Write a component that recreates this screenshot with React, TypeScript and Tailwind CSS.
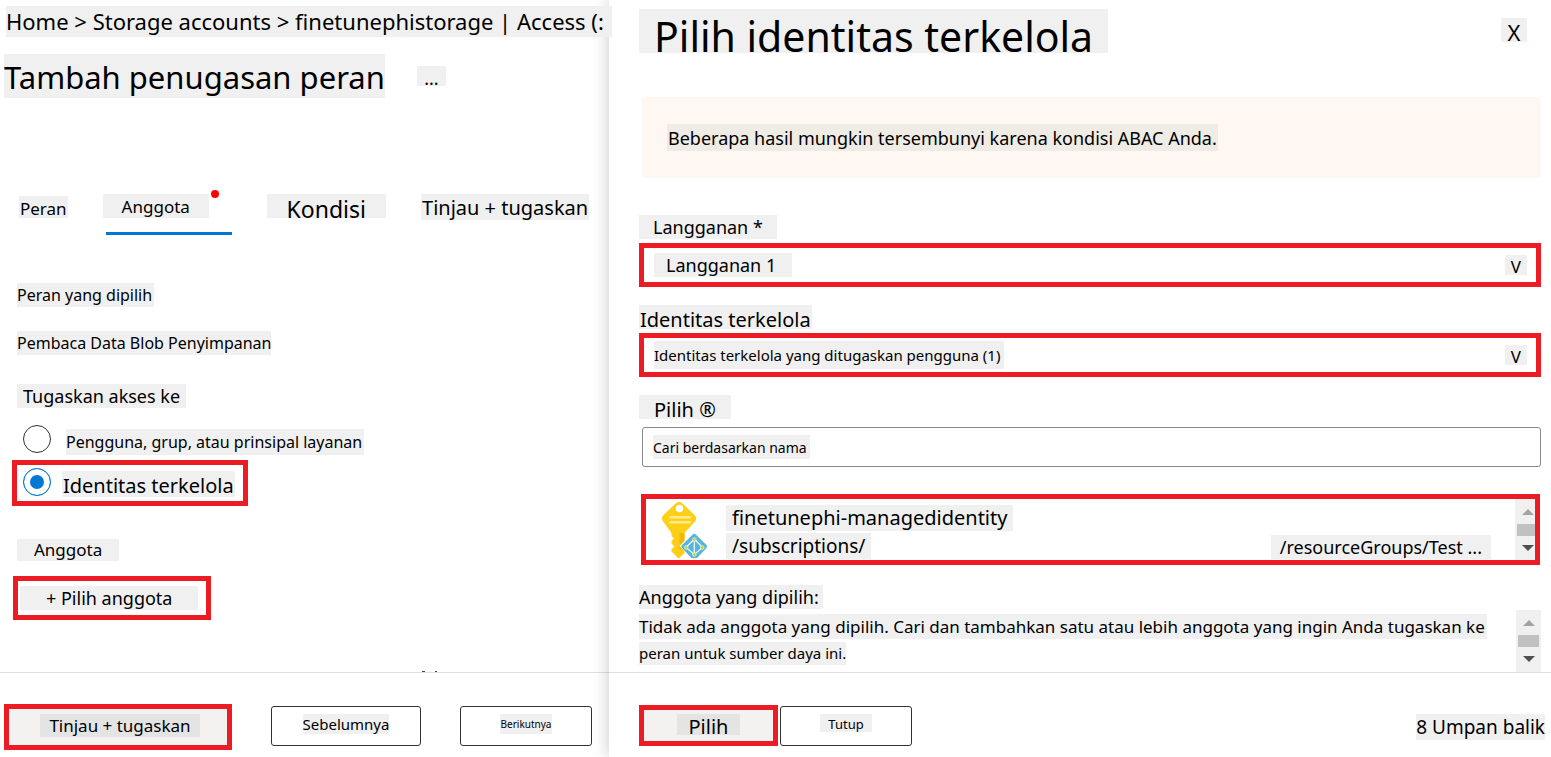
import type { ReactNode } from "react";

const tones = {
  gray: "bg-[#f0f0f0]",
  dark: "bg-[#e4e4e4]",
  warm: "bg-[#efebe5]",
};

function Tag({
  tone = "gray",
  className = "",
  children,
}: {
  tone?: keyof typeof tones;
  className?: string;
  children: ReactNode;
}) {
  return <span className={`block w-fit shrink-0 whitespace-nowrap ${tones[tone]} ${className}`}>{children}</span>;
}

function ScrollBar({ className = "" }: { className?: string }) {
  return (
    <div
      aria-hidden="true"
      className={`flex h-full w-[25px] shrink-0 flex-col items-center bg-[#f0f0f0] pt-[10px] ${className}`}
    >
      <svg width="12" height="6" viewBox="0 0 12 6">
        <path d="M6 0 12 6H0z" fill="#a3a3a3" />
      </svg>
      <div className="mt-[9px] h-3 w-full px-[2px]">
        <div className="h-full bg-[#c1c1c1]" />
      </div>
      <svg className="mt-[9px]" width="12" height="6" viewBox="0 0 12 6">
        <path d="M0 0h12L6 6z" fill="#505050" />
      </svg>
    </div>
  );
}

function KeyIcon() {
  return (
    <svg className="shrink-0" width="48" height="60" viewBox="0 0 48 60" aria-hidden="true">
      <path
        d="M14.500 4.500Q18 1 21.500 4.500L34 16.500Q36.500 19.500 34 22.500L23.500 34V54L18.500 59Q17.500 59.500 16.500 58.500L10.500 52.500V50L13.500 47.500L10.500 44.500V42L13 39.500L10.500 37V34L2.500 23Q-.5 19.500 2 16.500Z"
        fill="#fdd017"
      />
      <path d="M18.500 34H23.500V47L18.500 51.500Z" fill="#f5b50c" />
      <circle cx="18.500" cy="9.500" r="3.800" fill="#fff" />
      <rect x="8" y="17" width="22" height="2.600" rx="1" fill="#ffeb8f" />
      <rect x="8" y="22" width="22" height="2.600" rx="1" fill="#ffeb8f" />
      <path d="M33 32.500 47.500 47 35 59.500H31L18.500 47Z" fill="#fff" />
      <path
        d="M31.500 35.700Q33.300 34 35 35.700L45.500 46Q47 47.500 45.500 49L36 59H30.500L21 49Q19.500 47.500 21 46Z"
        fill="#59b4d9"
      />
      <path
        d="M33.300 40 25 48.500 33.300 55.500 41.500 48.500ZM33.300 40V55.500"
        fill="none"
        stroke="#e8f6fc"
        strokeWidth="1.300"
      />
      <g fill="#b8d432" stroke="#fff" strokeWidth="0.600">
        <circle cx="33.300" cy="40.500" r="1.800" />
        <circle cx="25.200" cy="48.500" r="1.800" />
        <circle cx="41.300" cy="48.500" r="1.800" />
        <circle cx="33.300" cy="55.500" r="1.800" />
      </g>
    </svg>
  );
}

const radio =
  "size-7 shrink-0 appearance-none rounded-full border border-[#323130] bg-white checked:border-[#0078d4] checked:bg-[#0078d4] checked:shadow-[inset_0_0_0_6px_#ffffff]";
const plainButton = "flex h-10 justify-center rounded-[3px] border border-[#323130] bg-white pt-[7px]";
const selectBox = "mt-1 flex h-11 items-center justify-between border-5 border-[#ed1c24] bg-white pl-[10px] pr-[9px]";

function AssignmentPage() {
  return (
    <main className="flex min-w-0 flex-col">
      <nav aria-label="Breadcrumb" className="relative z-10 pl-1.5 pt-1.5">
        <Tag className="h-[31px] pr-2 text-[22px] leading-[31px]">
          <a href="#home">Home</a> &gt; <a href="#storage">Storage accounts</a> &gt;{" "}
          <a href="#account">finetunephistorage | Access (:</a>
        </Tag>
      </nav>
      <div className="mt-[17px] flex items-start gap-8 pl-1">
        <h1>
          <Tag className="h-11 text-[31px] leading-[46px]">Tambah penugasan peran</Tag>
        </h1>
        <button type="button" aria-label="Lainnya" className="mt-3 h-5 w-[29px] bg-[#f0f0f0] text-[18px] leading-6">
          ...
        </button>
      </div>

      <div role="tablist" className="mt-24 flex h-[41px] items-start gap-[35px] pl-[19px]">
        <button type="button" role="tab" className="mt-0.5">
          <Tag className="h-[22px] px-px text-[17px] leading-[26px]">Peran</Tag>
        </button>
        <button
          type="button"
          role="tab"
          aria-selected="true"
          className="relative flex h-full w-[129px] flex-col items-start justify-between"
        >
          <Tag className="h-6 px-[19px] text-[17px] leading-[26px]">Anggota</Tag>
          <span className="absolute -top-1 right-[13px] size-2 rounded-full bg-[#ff0000]" />
          <span className="ml-[3px] h-[3px] w-[126px] bg-[#0078d4]" />
        </button>
        <button type="button" role="tab">
          <Tag className="h-6 px-5 text-[23px] leading-[31px]">Kondisi</Tag>
        </button>
        <button type="button" role="tab">
          <Tag className="h-[26px] px-px text-[20px] leading-7">Tinjau + tugaskan</Tag>
        </button>
      </div>

      <div className="flex flex-col pl-[17px]">
        <Tag className="mt-12 h-6 pr-0.5 text-[16px] leading-6">Peran yang dipilih</Tag>
        <Tag className="mt-6 h-6 text-[16px] leading-6">Pembaca Data Blob Penyimpanan</Tag>
        <fieldset className="mt-[29px]">
          <legend>
            <Tag className="h-6 px-1.5 text-[18px] leading-6">Tugaskan akses ke</Tag>
          </legend>
          <div className="mt-[17px] flex items-start pl-1.5">
            <input id="assign-user" type="radio" name="assign" className={radio} />
            <label htmlFor="assign-user" className="ml-[15px] mt-1">
              <Tag className="h-[26px] pr-0.5 text-[16px] leading-[26px]">Pengguna, grup, atau prinsipal layanan</Tag>
            </label>
          </div>
          <div className="-ml-[5px] mt-[5px] flex h-[46px] w-fit items-start border-5 border-[#ed1c24] pl-1.5 pr-2 pt-[3px]">
            <input id="assign-identity" type="radio" name="assign" defaultChecked className={radio} />
            <label htmlFor="assign-identity" className="ml-[11px] mt-[3px]">
              <Tag className="h-[26px] px-px text-[20px] leading-[30px]">Identitas terkelola</Tag>
            </label>
          </div>
        </fieldset>
        <Tag className="mt-[33px] h-[22px] px-[17px] text-[17px] leading-[22px]">Anggota</Tag>
        <button
          type="button"
          className="-ml-1 mt-[15px] flex h-11 w-fit items-center border-5 border-[#ed1c24] pl-0.5 pr-2"
        >
          <Tag className="h-6 px-[26px] text-[18px] leading-6">+ Pilih anggota</Tag>
        </button>
      </div>

      <svg className="ml-[422px] mt-auto" width="16" height="1" viewBox="0 0 16 1" aria-hidden="true">
        <path d="M0 0h3v1H0zM13 0h2v1h-2z" fill="#444" />
      </svg>
      <footer className="flex h-[85px] items-start gap-[39px] border-t border-[#dedede] pl-1 pt-[31px]">
        <button
          type="button"
          className="flex h-[46px] w-[228px] justify-center border-5 border-[#ed1c24] bg-[#f3f2f1] pl-1 pt-[5px]"
        >
          <Tag tone="dark" className="h-[23px] px-[9px] text-[17px] leading-[23px]">
            Tinjau + tugaskan
          </Tag>
        </button>
        <button type="button" className={`${plainButton} mt-0.5 w-[150px]`}>
          <Tag className="h-5 text-[15px] leading-5">Sebelumnya</Tag>
        </button>
        <button type="button" className={`${plainButton} mt-0.5 w-[132px]`}>
          <Tag className="h-5 px-px text-[10px] leading-5">Berikutnya</Tag>
        </button>
      </footer>
    </main>
  );
}

function IdentityPanel() {
  return (
    <aside className="flex min-w-0 flex-col bg-white shadow-[0_0_16px_rgba(0,0,0,0.22)]">
      <div className="flex flex-col pl-[30px] pr-[10px] pt-[9px]">
        <div className="flex items-start justify-between pr-[14px]">
          <h2>
            <Tag className="h-11 px-[15px] text-[41px] leading-[54px]">Pilih identitas terkelola</Tag>
          </h2>
          <button
            type="button"
            aria-label="Tutup panel"
            className="mt-[9px] h-6 w-[26px] bg-[#f0f0f0] text-[22px] leading-[29px]"
          >
            X
          </button>
        </div>
        <div className="ml-[3px] mt-11 flex h-[81px] items-center rounded-[3px] bg-[#fff7f1] pl-[25px]">
          <Tag tone="warm" className="h-[27px] px-px text-[18px] leading-7">
            Beberapa hasil mungkin tersembunyi karena kondisi ABAC Anda.
          </Tag>
        </div>

        <label htmlFor="subscription" className="mt-[37px] w-fit">
          <Tag className="h-6 px-[14px] text-[18px] leading-6">Langganan *</Tag>
        </label>
        <div className={selectBox}>
          <select
            id="subscription"
            className="h-6 w-[138px] appearance-none bg-[#f0f0f0] pl-3 text-[18px] leading-6"
          >
            <option>Langganan 1</option>
          </select>
          <Tag className="h-5 px-1.5 text-[17px] leading-[23px]">V</Tag>
        </div>

        <label htmlFor="identity" className="mt-[18px] w-fit">
          <Tag className="h-6 px-px text-[20px] leading-[30px]">Identitas terkelola</Tag>
        </label>
        <div className={selectBox}>
          <select id="identity" className="h-7 w-[350px] appearance-none bg-[#f0f0f0] text-[15px] leading-7">
            <option>Identitas terkelola yang ditugaskan pengguna (1)</option>
          </select>
          <Tag className="h-5 px-1.5 text-[17px] leading-[23px]">V</Tag>
        </div>

        <label htmlFor="search" className="mt-[18px] w-fit">
          <Tag className="h-6 px-[15px] text-[20px] leading-[30px]">Pilih ®</Tag>
        </label>
        <label
          htmlFor="search"
          className="ml-[3px] mt-2 flex h-10 items-center rounded-[3px] border border-[#8a8886] pl-[10px]"
        >
          <input
            id="search"
            type="text"
            placeholder="Cari berdasarkan nama"
            className="h-6 w-[157px] bg-[#f0f0f0] text-[14px] placeholder:text-black"
          />
        </label>

        <div className="ml-0.5 mr-px mt-[27px] flex h-[71px] items-start overflow-hidden border-5 border-[#ed1c24] pl-[15px]">
          <KeyIcon />
          <div className="ml-[17px] flex min-w-0 flex-1 flex-col gap-0.5 pt-1.5">
            <Tag className="h-[26px] px-1.5 text-[20px] leading-[26px]">finetunephi-managedidentity</Tag>
            <div className="flex items-end justify-between pr-6">
              <Tag className="h-[26px] px-1.5 text-[19px] leading-[26px]">/subscriptions/</Tag>
              <Tag className="h-6 px-[9px] text-[18px] leading-6">/resourceGroups/Test ...</Tag>
            </div>
          </div>
          <ScrollBar className="-mr-[5px]" />
        </div>

        <Tag className="mt-5 h-6 pr-1 text-[18px] leading-6">Anggota yang dipilih:</Tag>
        <div className="mt-px flex h-[62px] items-start justify-between">
          <p className="flex flex-col gap-[3px] pt-1">
            <Tag className="h-[25px] pr-0.5 text-[17px] leading-[25px]">
              Tidak ada anggota yang dipilih. Cari dan tambahkan satu atau lebih anggota yang ingin Anda tugaskan ke
            </Tag>
            <Tag className="h-[23px] text-[15px] leading-[23px]">peran untuk sumber daya ini.</Tag>
          </p>
          <ScrollBar />
        </div>
      </div>

      <footer className="mt-auto flex h-[85px] items-start border-t border-[#dedede] pl-[30px] pr-1.5 pt-8">
        <button
          type="button"
          className="flex h-[41px] w-[139px] justify-center border-5 border-[#ed1c24] bg-[#f3f2f1] pt-1"
        >
          <Tag tone="dark" className="h-[21px] px-3 text-[20px] leading-[25px]">
            Pilih
          </Tag>
        </button>
        <button type="button" className={`${plainButton} ml-0.5 mt-px w-[132px]`}>
          <Tag className="h-[18px] px-2 text-[13px] leading-5">Tutup</Tag>
        </button>
        <a href="#feedback" className="ml-auto mt-[9px]">
          <Tag className="h-[26px] text-[19px] leading-[27px]">8 Umpan balik</Tag>
        </a>
      </footer>
    </aside>
  );
}

export default function App() {
  return (
    <div className="grid min-h-screen grid-cols-[609fr_942fr] overflow-hidden bg-white font-['Noto_Sans',sans-serif] text-black">
      <AssignmentPage />
      <IdentityPanel />
    </div>
  );
}
